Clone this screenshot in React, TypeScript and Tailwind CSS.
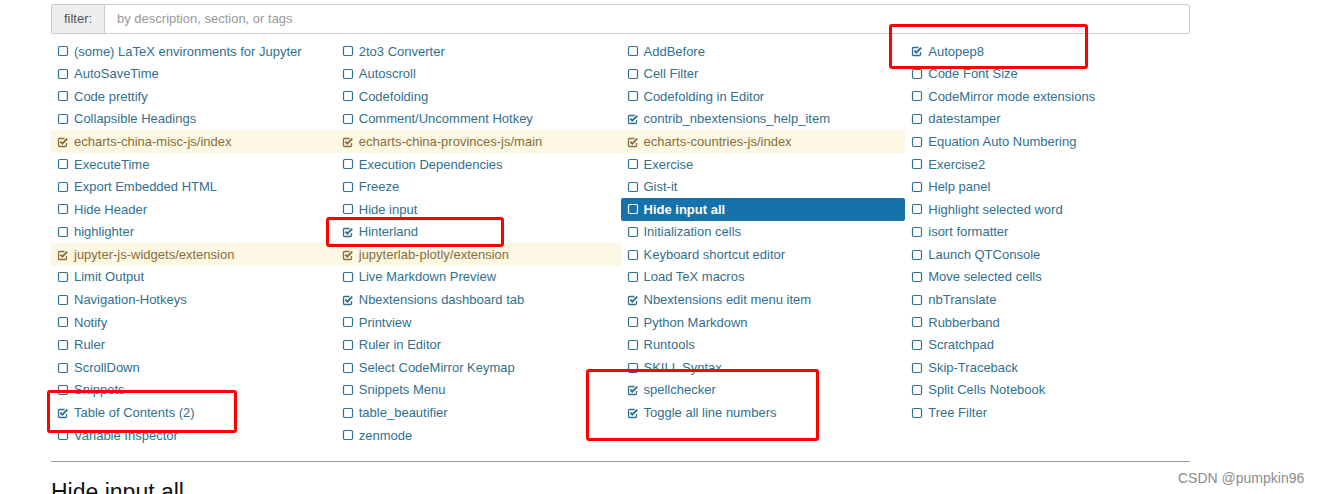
type Kind = "off" | "on" | "warn" | "active";
type Item = [string, Kind?];

const columns: Item[][] = [
  [
    ["(some) LaTeX environments for Jupyter"],
    ["AutoSaveTime"],
    ["Code prettify"],
    ["Collapsible Headings"],
    ["echarts-china-misc-js/index", "warn"],
    ["ExecuteTime"],
    ["Export Embedded HTML"],
    ["Hide Header"],
    ["highlighter"],
    ["jupyter-js-widgets/extension", "warn"],
    ["Limit Output"],
    ["Navigation-Hotkeys"],
    ["Notify"],
    ["Ruler"],
    ["ScrollDown"],
    ["Snippets"],
    ["Table of Contents (2)", "on"],
    ["Variable Inspector"],
  ],
  [
    ["2to3 Converter"],
    ["Autoscroll"],
    ["Codefolding"],
    ["Comment/Uncomment Hotkey"],
    ["echarts-china-provinces-js/main", "warn"],
    ["Execution Dependencies"],
    ["Freeze"],
    ["Hide input"],
    ["Hinterland", "on"],
    ["jupyterlab-plotly/extension", "warn"],
    ["Live Markdown Preview"],
    ["Nbextensions dashboard tab", "on"],
    ["Printview"],
    ["Ruler in Editor"],
    ["Select CodeMirror Keymap"],
    ["Snippets Menu"],
    ["table_beautifier"],
    ["zenmode"],
  ],
  [
    ["AddBefore"],
    ["Cell Filter"],
    ["Codefolding in Editor"],
    ["contrib_nbextensions_help_item", "on"],
    ["echarts-countries-js/index", "warn"],
    ["Exercise"],
    ["Gist-it"],
    ["Hide input all", "active"],
    ["Initialization cells"],
    ["Keyboard shortcut editor"],
    ["Load TeX macros"],
    ["Nbextensions edit menu item", "on"],
    ["Python Markdown"],
    ["Runtools"],
    ["SKILL Syntax"],
    ["spellchecker", "on"],
    ["Toggle all line numbers", "on"],
  ],
  [
    ["Autopep8", "on"],
    ["Code Font Size"],
    ["CodeMirror mode extensions"],
    ["datestamper"],
    ["Equation Auto Numbering"],
    ["Exercise2"],
    ["Help panel"],
    ["Highlight selected word"],
    ["isort formatter"],
    ["Launch QTConsole"],
    ["Move selected cells"],
    ["nbTranslate"],
    ["Rubberband"],
    ["Scratchpad"],
    ["Skip-Traceback"],
    ["Split Cells Notebook"],
    ["Tree Filter"],
  ],
];

const Box = ({ checked }: { checked: boolean }) => (
  <svg width="12" height="12" viewBox="0 0 12 12" className="shrink-0">
    {checked ? (
      <>
        <path
          d="M9.5 7v2.5a1 1 0 0 1-1 1h-6a1 1 0 0 1-1-1v-6a1 1 0 0 1 1-1h5"
          fill="none"
          stroke="currentColor"
          strokeWidth="1.3"
        />
        <path d="M3.3 5.6l2 2 5-5" fill="none" stroke="currentColor" strokeWidth="2" />
      </>
    ) : (
      <rect x="1.5" y="1.5" width="9" height="9" rx="1.2" fill="none" stroke="currentColor" strokeWidth="1.2" />
    )}
  </svg>
);

const Row = ({ item }: { item?: Item }) => {
  if (!item) return <div />;
  const [label, kind = "off"] = item;
  let cls = "text-[#31708f]";
  if (kind === "warn") cls = "bg-[#fcf8e3] text-[#8a6d3b]";
  if (kind === "active") cls = "bg-[#1572aa] text-white font-bold rounded-[2px]";
  return (
    <div className={`flex items-center gap-[5px] pl-[6px] whitespace-nowrap ${cls}`}>
      <Box checked={kind !== "off" && kind !== "active"} />
      <span>{label}</span>
    </div>
  );
};

const RedBox = ({ className }: { className: string }) => (
  <div className={`absolute border-[3px] border-[#ff0000] rounded-[3px] pointer-events-none ${className}`} />
);

export default function App() {
  const rows = Array.from({ length: 18 }, (_, r) => r);
  return (
    <div className="relative h-[494px] w-[1321px] overflow-hidden bg-white font-['Liberation_Sans',Arial,sans-serif] text-[13px]">
      <div className="ml-[51px] w-[1139px] pt-[4px]">
        {/* filter */}
        <div className="flex h-[30px] border border-[#cccccc] rounded-[2px]">
          <div className="flex w-[53px] items-center justify-center border-r border-[#cccccc] bg-[#eeeeee] text-[#555555]">
            filter:
          </div>
          <div className="flex flex-1 items-center pl-[12px] text-[#999999]">by description, section, or tags</div>
        </div>

        {/* extension list */}
        <div className="mt-[6px] grid grid-cols-4 auto-rows-[22.6px]">
          {rows.map((r) => columns.map((col, c) => <Row key={`${r}-${c}`} item={col[r]} />))}
        </div>

        <hr className="mt-[14px] border-t border-[#999999]" />
        <h3 className="mt-[19px] text-[23px] leading-none text-[#111111]">Hide input all</h3>
      </div>

      <div className="absolute left-[1178px] top-[468px] text-[14px] text-[#8c8c8c]">CSDN @pumpkin96</div>

      <RedBox className="left-[889px] top-[24px] w-[199px] h-[45px]" />
      <RedBox className="left-[326px] top-[217px] w-[178px] h-[30px]" />
      <RedBox className="left-[47px] top-[390px] w-[190px] h-[43px]" />
      <RedBox className="left-[586px] top-[369px] w-[233px] h-[72px]" />
    </div>
  );
}
